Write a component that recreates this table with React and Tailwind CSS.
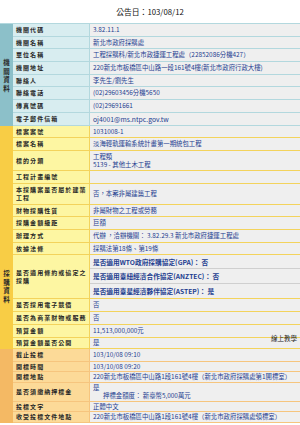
import React from "react";

const blue = {
  group: "bg-[#8cc0c9]",
  label: "bg-[#d8edf0]",
  line: "border-[#b3d8de]",
};
const yellow = {
  group: "bg-[#f8cd45]",
  label: "bg-[#fdf6a2]",
  line: "border-[#f3d35c]",
};
const orange = {
  group: "bg-[#f4b964]",
  label: "bg-[#fcda98]",
  line: "border-[#f6c57e]",
};

function V({ children, className = "" }) {
  return (
    <div className={`text-[6.4px] leading-[8px] text-[#1d3d8f] whitespace-nowrap ${className}`}>
      {children}
    </div>
  );
}

function Row({ label, h, theme, children, raw }) {
  return (
    <div className={`flex ${h}`}>
      <div
        className={`w-[77px] shrink-0 flex items-center pl-[3px] ${theme.label} border-b border-r ${theme.line}`}
      >
        <span className="text-[6px] font-bold tracking-[1.05px] leading-[8px] text-[#262626]">
          {label}
        </span>
      </div>
      {raw ? (
        <div className="flex-1 min-w-0 flex flex-col bg-[#efefef]">{children}</div>
      ) : (
        <div
          className={`flex-1 min-w-0 flex flex-col justify-center pl-[3px] bg-[#efefef] border-b ${theme.line}`}
        >
          {children}
        </div>
      )}
    </div>
  );
}

function Group({ theme, chars, pt, children }) {
  return (
    <div className="flex">
      <div className={`w-[13px] shrink-0 ${theme.group} flex flex-col items-center ${pt}`}>
        {chars &&
          chars.split("").map((c) => (
            <span key={c} className="text-[6.5px] font-bold leading-[8.5px] text-[#2a2a2a]">
              {c}
            </span>
          ))}
      </div>
      <div className="flex-1 min-w-0 flex flex-col">{children}</div>
    </div>
  );
}

export default function App() {
  return (
    <div className="relative w-[300px] h-[425px] overflow-hidden bg-white font-['Noto_Sans_CJK_TC','Noto_Sans',sans-serif]">
      <div className="h-[23px] flex items-center justify-center text-[7.8px] text-[#111] pt-[1px]">
        公告日：103/08/12
      </div>
      <div className="border-t border-[#b3d8de]">
        <Group theme={blue} chars="機關資料" pt="pt-[34px]">
          <Row theme={blue} h="h-[13px]" label="機關代碼"><V>3.82.11.1</V></Row>
          <Row theme={blue} h="h-[12px]" label="機關名稱"><V>新北市政府採購處</V></Row>
          <Row theme={blue} h="h-[13px]" label="單位名稱"><V>工程採購科/新北市政捷運工程處（22852086分機427）</V></Row>
          <Row theme={blue} h="h-[13px]" label="機關地址"><V>220新北市板橋區中山路一段161號4樓(新北市政府行政大樓)</V></Row>
          <Row theme={blue} h="h-[12px]" label="聯絡人"><V>李先生/劉先生</V></Row>
          <Row theme={blue} h="h-[13px]" label="聯絡電話"><V>(02)29603456分機5650</V></Row>
          <Row theme={blue} h="h-[13px]" label="傳真號碼"><V>(02)29691661</V></Row>
          <Row theme={blue} h="h-[13px]" label="電子郵件信箱"><V className="text-[6.8px]">oj4001@ms.ntpc.gov.tw</V></Row>
        </Group>
        <Group theme={yellow} chars="採購資料" pt="pt-[143px]">
          <Row theme={yellow} h="h-[12px]" label="標案案號"><V>1031008-1</V></Row>
          <Row theme={yellow} h="h-[13px]" label="標案名稱"><V>淡海輕軌運輸系統計畫第一期統包工程</V></Row>
          <Row theme={yellow} h="h-[20px]" label="標的分類">
            <V>工程類</V>
            <V>5139 - 其他土木工程</V>
          </Row>
          <Row theme={yellow} h="h-[13px]" label="工程計畫編號"><V></V></Row>
          <Row theme={yellow} h="h-[21px]" label="本採購案是否屬於建築工程"><V>否，本案非屬建築工程</V></Row>
          <Row theme={yellow} h="h-[12px]" label="財物採購性質"><V>非屬財物之工程或勞務</V></Row>
          <Row theme={yellow} h="h-[13px]" label="採購金額級距"><V>巨額</V></Row>
          <Row theme={yellow} h="h-[13px]" label="辦理方式"><V>代辦 ，洽辦機關： 3.82.29.3 新北市政府捷運工程處</V></Row>
          <Row theme={yellow} h="h-[12px]" label="依據法條"><V>採購法第18條、第19條</V></Row>
          <Row theme={yellow} h="h-[44px]" label="是否適用條約或協定之採購" raw>
            <div className="h-[14px] flex items-center pl-[3px] border-b border-[#cfcfcf]">
              <V className="text-[6.7px] font-semibold">是否適用WTO政府採購協定(GPA)： 否</V>
            </div>
            <div className="h-[15px] flex items-center pl-[3px] border-b border-[#cfcfcf]">
              <V className="text-[6.7px] font-semibold">是否適用臺紐經濟合作協定(ANZTEC)： 否</V>
            </div>
            <div className={`h-[15px] flex items-center pl-[3px] border-b ${yellow.line}`}>
              <V className="text-[6.7px] font-semibold">是否適用臺星經濟夥伴協定(ASTEP)： 是</V>
            </div>
          </Row>
          <Row theme={yellow} h="h-[13px]" label="是否採用電子競價"><V>否</V></Row>
          <Row theme={yellow} h="h-[13px]" label="是否為商業財物或服務"><V>否</V></Row>
          <Row theme={yellow} h="h-[13px]" label="預算金額"><V>11,513,000,000元</V></Row>
          <Row theme={yellow} h="h-[11px]" label="預算金額是否公開"><V>是</V></Row>
        </Group>
        <Group theme={orange} pt="pt-[0px]">
          <Row theme={orange} h="h-[13px]" label="截止投標"><V>103/10/08 09:10</V></Row>
          <Row theme={orange} h="h-[10px]" label="開標時間"><V>103/10/08 09:20</V></Row>
          <Row theme={orange} h="h-[11px]" label="開標地點"><V>220新北市板橋區中山路1段161號4樓（新北市政府採購處第1開標室）</V></Row>
          <Row theme={orange} h="h-[19px]" label="是否須繳納押標金">
            <V>是</V>
            <V className="pl-[10px]">押標金額度： 新臺幣5,000萬元</V>
          </Row>
          <Row theme={orange} h="h-[10px]" label="投標文字"><V>正體中文</V></Row>
          <Row theme={orange} h="h-[11px]" label="收受投標文件地點"><V>220新北市板橋區中山路1段161號4樓（新北市政府採購處領標室）</V></Row>
        </Group>
      </div>
      <div className="absolute right-[3px] top-[334px] text-[6.5px] leading-[8px] text-[#222]">
        線上教學
      </div>
    </div>
  );
}
